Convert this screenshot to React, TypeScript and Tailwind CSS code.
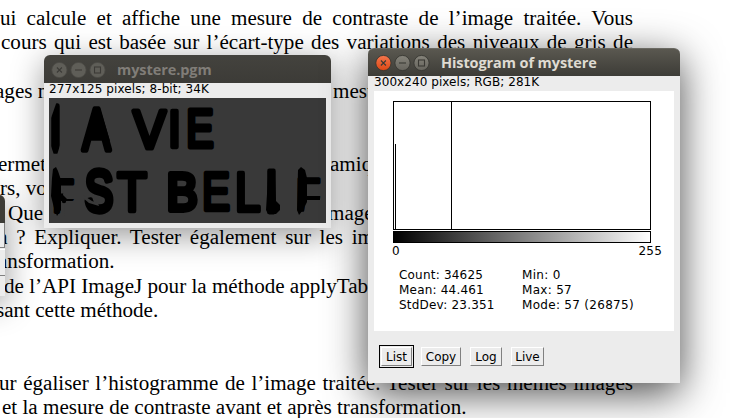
import React from "react";

type Segment = { text: string; x: number; width: number; justify?: boolean };

const LINES: Segment[][] = [
  [{ text: "ui calcule et affiche une mesure de contraste de l’image traitée. Vous", x: 0, width: 633, justify: true }],
  [{ text: "cours qui est basée sur l’écart-type des variations des niveaux de gris de", x: 1, width: 632, justify: true }],
  [],
  [{ text: "ages n", x: -5, width: 338 }, { text: "mesu", x: 0, width: 60 }],
  [],
  [],
  [{ text: "ermet", x: -2, width: 332 }, { text: "amiq", x: 0, width: 60 }],
  [{ text: "rs, vo", x: 0, width: 60 }],
  [{ text: "Que", x: 8, width: 320 }, { text: "mage", x: 0, width: 60 }],
  [{ text: "n ? Expliquer. Tester également sur les im", x: -3, width: 377, justify: true }],
  [{ text: "ansformation.", x: -2, width: 118 }],
  [{ text: "de l’API ImageJ pour la méthode applyTab", x: 4, width: 365 }],
  [{ text: "sant cette méthode.", x: -4, width: 162 }],
  [],
  [],
  [{ text: "ur égaliser l’histogramme de l’image traitée. Tester sur les mêmes images", x: -1, width: 634, justify: true }],
  [{ text: "et la mesure de contraste avant et après transformation.", x: 2, width: 480 }],
];

function Page() {
  return (
    <div className="pt-[6px] font-['Liberation_Serif',serif] text-[21.1px] leading-[24.33px] text-black">
      {LINES.map((segments, i) => (
        <div key={i} className="flex h-[24.33px] whitespace-nowrap">
          {segments.map((s) => (
            <span
              key={s.text}
              className={"shrink-0 " + (s.justify ? "whitespace-normal [text-align-last:justify]" : "")}
              style={{ marginLeft: s.x, width: s.width }}
            >
              {s.text}
            </span>
          ))}
        </div>
      ))}
    </div>
  );
}

function WindowButtons({ active }: { active: boolean }) {
  const ring = active ? "#34332e" : "#4b4a45";
  const fill = active ? "url(#grayBtn)" : "#5f5e58";
  const mark = active ? "#3a3934" : "#3c3b37";
  return (
    <svg width="56" height="18" viewBox="0 0 56 18" className="block shrink-0">
      <defs>
        <linearGradient id="redBtn" x1="0" y1="0" x2="0" y2="1">
          <stop offset="0" stopColor="#f4764d" />
          <stop offset="1" stopColor="#dd4814" />
        </linearGradient>
        <linearGradient id="grayBtn" x1="0" y1="0" x2="0" y2="1">
          <stop offset="0" stopColor="#85837a" />
          <stop offset="1" stopColor="#66645d" />
        </linearGradient>
      </defs>
      <circle cx="9.4" cy="9" r="7.6" fill={active ? "url(#redBtn)" : fill} stroke={ring} strokeWidth="0.8" />
      <circle cx="28.5" cy="9" r="7.6" fill={fill} stroke={ring} strokeWidth="0.8" />
      <circle cx="47.5" cy="9" r="7.6" fill={fill} stroke={ring} strokeWidth="0.8" />
      <g fill="none" stroke={mark} strokeWidth="1.1">
        <path d="M6.9 6.5l5 5M11.9 6.5l-5 5" />
        <path d="M25 9h7" />
        <rect x="44.5" y="6" width="6" height="6" />
      </g>
    </svg>
  );
}

type Letter = { c: string; x: number; y: number; w: number; h: number; bold?: number };

// Ink extents of each capital, in thousandths of the font size.
const INK: Record<string, [number, number]> = {
  I: [93, 186],
  A: [-1, 668],
  V: [4, 661],
  E: [79, 613],
  S: [45, 615],
  T: [21, 588],
  B: [73, 614],
  L: [73, 520],
  F: [82, 569],
};

const LETTERS: Letter[] = [
  { c: "I", x: 2, y: 6, w: 9, h: 49 },
  { c: "A", x: 31, y: 8, w: 33, h: 46, bold: 5 },
  { c: "V", x: 82, y: 10, w: 37, h: 42, bold: 5 },
  { c: "I", x: 121, y: 11, w: 9, h: 40 },
  { c: "E", x: 138, y: 9, w: 27, h: 42, bold: 5 },
  { c: "F", x: 4, y: 80, w: 22, h: 36 },
  { c: "S", x: 35, y: 71, w: 30, h: 45, bold: 6 },
  { c: "T", x: 67, y: 72, w: 32, h: 43 },
  { c: "B", x: 118, y: 73, w: 31, h: 42, bold: 6 },
  { c: "E", x: 154, y: 72, w: 27, h: 42 },
  { c: "L", x: 187, y: 72, w: 25, h: 43 },
  { c: "I", x: 218, y: 71, w: 9, h: 45 },
  { c: "F", x: 248, y: 79, w: 24, h: 35 },
];

function ScanImage() {
  return (
    <svg width="277" height="125" viewBox="0 0 277 125" className="block">
      <rect width="277" height="125" fill="#393939" />
      <g fontFamily="'Liberation Sans', sans-serif" fontSize="54" fill="#000" stroke="#000" strokeLinejoin="round">
        {LETTERS.map((l, i) => {
          const [a, b] = INK[l.c];
          const s = l.bold ?? 4.5;
          const sx = (l.w - s) / ((b - a) * 0.054);
          const sy = (l.h - s) / 37.2;
          const tx = l.x + s / 2 - a * 0.054 * sx;
          return (
            <text key={i} strokeWidth={s} transform={`translate(${tx} ${l.y + l.h - s / 2}) scale(${sx} ${sy})`}>
              {l.c}
            </text>
          );
        })}
      </g>
      {/* gaps left by thresholding */}
      <g fill="#393939">
        <path d="M0 3H8L2 20H0Z" />
        <path d="M0 42L5 57H0Z" />
        <path d="M12 44V57H8Z" />
        <path d="M15 89H28V101H18L14 97Z" />
        <path d="M15 118L16 106H28V118Z" />
        <path d="M258 88H274V98H258Z" />
        <path d="M258 102H274V118H254Z" />
        <path d="M34 100L40 105L50 108L49 105L43 103L34 97Z" />
      </g>
      {/* ink spread */}
      <g fill="#000">
        <path d="M45 10H51L61 43L46 39L35 43Z" />
        <path d="M4 71L7 69L9 73L12 82V112L8 118L5 110L2 98L3 80Z" />
        <circle cx="15" cy="103" r="2.2" />
        <path d="M219 80H226L227 103L231 107L231 112L227 116L219 116L217 112Z" />
        <path d="M249 72L252 69L256 72L258 80V104L254 112L250 117L248 112Z" />
        <path d="M257 99h11v-1h3v4h-14z" />
      </g>
    </svg>
  );
}

function MystereWindow() {
  return (
    <div className="absolute left-[44px] top-[55px] h-[173px] w-[287px] rounded-t-[6px] bg-[#ececec] shadow-[0_7px_32px_rgba(0,0,0,0.42)]">
      <div className="flex h-[28px] items-center rounded-t-[6px] bg-linear-to-b from-[#44433e] to-[#3c3b37] pl-[6px] pt-px">
        <WindowButtons active={false} />
        <span className="ml-[11px] pt-px font-['Open_Sans',sans-serif] text-[14.5px] font-bold leading-none tracking-[-0.08px] text-[#807d78]">mystere.pgm</span>
      </div>
      <div className="h-[15px] whitespace-nowrap pl-[5px] font-['DejaVu_Sans',sans-serif] text-[12px] leading-[12px] tracking-[0.08px] text-black">
        277x125 pixels; 8-bit; 34K
      </div>
      <div className="ml-[5px]">
        <ScanImage />
      </div>
    </div>
  );
}

function Plot() {
  return (
    <svg width="258" height="142" viewBox="0 0 258 142" className="block" shapeRendering="crispEdges">
      <defs>
        <linearGradient id="ramp">
          <stop offset="0" stopColor="#000" />
          <stop offset="1" stopColor="#fff" />
        </linearGradient>
      </defs>
      <rect x="0.5" y="0.5" width="257" height="128" fill="#fff" stroke="#000" />
      <rect x="2" y="43" width="1" height="86" />
      <rect x="58" y="0" width="1" height="129" />
      <rect x="0.5" y="130.5" width="257" height="11" fill="url(#ramp)" stroke="#000" />
    </svg>
  );
}

function AwtButton({ label, width, focused }: { label: string; width: string; focused?: boolean }) {
  const button = (
    <button
      className={
        "flex h-[19px] items-center justify-center border border-b-[#808080] border-l-white border-r-[#808080] border-t-white bg-[#ececec] text-[12px] leading-none text-black " +
        width
      }
    >
      {label}
    </button>
  );
  return focused ? <div className="border border-black p-px">{button}</div> : button;
}

function HistogramWindow() {
  return (
    <div className="absolute left-[368px] top-[48px] h-[335px] w-[312px] rounded-t-[6px] bg-[#ececec] font-['DejaVu_Sans',sans-serif] text-[12px] text-black shadow-[0_10px_42px_rgba(0,0,0,0.72)]">
      <div className="flex h-[28px] items-center rounded-t-[6px] border-t border-[#6b6a63] bg-linear-to-b from-[#5a5850] to-[#3d3c37] pl-[6px]">
        <WindowButtons active />
        <span className="ml-[11px] whitespace-nowrap pt-px font-['Open_Sans',sans-serif] text-[14.5px] font-bold leading-none tracking-[-0.1px] text-[#dfdbd2]">Histogram of mystere</span>
      </div>
      <div className="h-[15px] whitespace-nowrap pl-[6px] leading-[12px] tracking-[0.06px]">300x240 pixels; RGB; 281K</div>
      <div className="ml-[6px] h-[240px] w-[300px] bg-white pt-[10px]">
        <div className="ml-[19px]">
          <Plot />
        </div>
        <div className="ml-[18px] flex w-[270px] justify-between pt-px leading-[14px] tracking-[0.2px]">
          <span>0</span>
          <span>255</span>
        </div>
        <div className="flex pl-[25px] pt-[10px] leading-[15px]">
          <div className="w-[123px] tracking-[0.2px]">
            <div>Count: 34625</div>
            <div>Mean: 44.461</div>
            <div>StdDev: 23.351</div>
          </div>
          <div className="whitespace-nowrap tracking-[0.3px]">
            <div>Min: 0</div>
            <div>Max: 57</div>
            <div>Mode: 57 (26875)</div>
          </div>
        </div>
      </div>
      <div className="flex items-center pl-[11px] pt-[14px]">
        <AwtButton label="List" width="w-[31px]" focused />
        <div className="ml-[7px] flex gap-[9px]">
          <AwtButton label="Copy" width="w-[40px]" />
          <AwtButton label="Log" width="w-[32px]" />
          <AwtButton label="Live" width="w-[33px]" />
        </div>
      </div>
    </div>
  );
}

function EdgeWindow() {
  return (
    <div className="absolute -left-[95px] top-[195px] h-[101px] w-[100px] rounded-tr-[6px] bg-[#ececec] shadow-[0_7px_32px_rgba(0,0,0,0.42)]">
      <div className="h-[28px] rounded-tr-[6px] bg-[#3d3c37]" />
      <div className="h-[25px] border-b border-r border-[#808080]" />
      <div className="mt-px h-[27px] border-b border-t border-b-[#808080] border-t-white" />
    </div>
  );
}

export default function App() {
  return (
    <div className="relative h-[418px] w-[738px] overflow-hidden bg-white">
      <Page />
      <EdgeWindow />
      <MystereWindow />
      <HistogramWindow />
    </div>
  );
}
